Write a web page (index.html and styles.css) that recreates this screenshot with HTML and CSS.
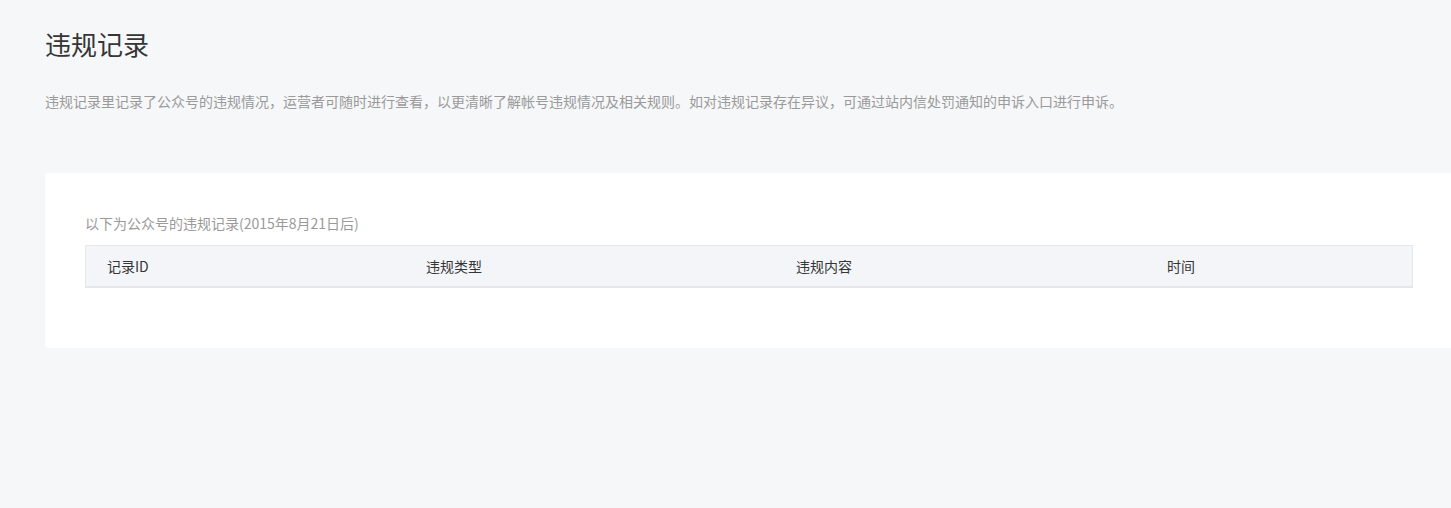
FILE: index.html
```html
<!DOCTYPE html>
<html lang="zh">
<head>
<meta charset="utf-8">
<link rel="stylesheet" href="styles.css">
</head>
<body>
<div class="page">
  <h1 class="title">违规记录</h1>
  <p class="desc">违规记录里记录了公众号的违规情况，运营者可随时进行查看，以更清晰了解帐号违规情况及相关规则。如对违规记录存在异议，可通过站内信处罚通知的申诉入口进行申诉。</p>
  <div class="card">
    <p class="sub">以下为公众号的违规记录(2015年8月21日后)</p>
    <div class="table">
      <div class="thead">
        <div class="th c1">记录ID</div>
        <div class="th c2">违规类型</div>
        <div class="th c3">违规内容</div>
        <div class="th c4">时间</div>
      </div>
    </div>
  </div>
</div>
</body>
</html>
```
FILE: styles.css
```css
html, body {
  margin: 0;
  padding: 0;
  background: #f6f7f9;
  font-family: "Noto Sans CJK SC", "Liberation Sans", sans-serif;
}
.page {
  padding: 26px 0 0 45px;
}
.title {
  margin: 0;
  font-size: 26px;
  font-weight: 400;
  line-height: 36px;
  color: #353535;
}
.desc {
  margin: 29px 0 0;
  font-size: 14px;
  line-height: 20px;
  color: #9a9a9a;
  white-space: nowrap;
}
.card {
  margin-top: 62px;
  background: #fff;
  border-radius: 3px 0 0 3px;
  padding: 40px 38px 60px 40px;
  box-shadow: 0 1px 2px rgba(0,0,0,0.03);
}
.sub {
  margin: 0 0 12px;
  font-size: 14px;
  line-height: 20px;
  color: #9a9a9a;
}
.table {
  border: 1px solid #e4e8eb;
  border-bottom-width: 2px;
  background: #f4f5f9;
}
.thead {
  display: grid;
  grid-template-columns: 319px 370px 371px 1fr;
  height: 40px;
  align-items: center;
}
.th {
  padding-left: 21px;
  font-size: 14px;
  color: #353535;
}
```
